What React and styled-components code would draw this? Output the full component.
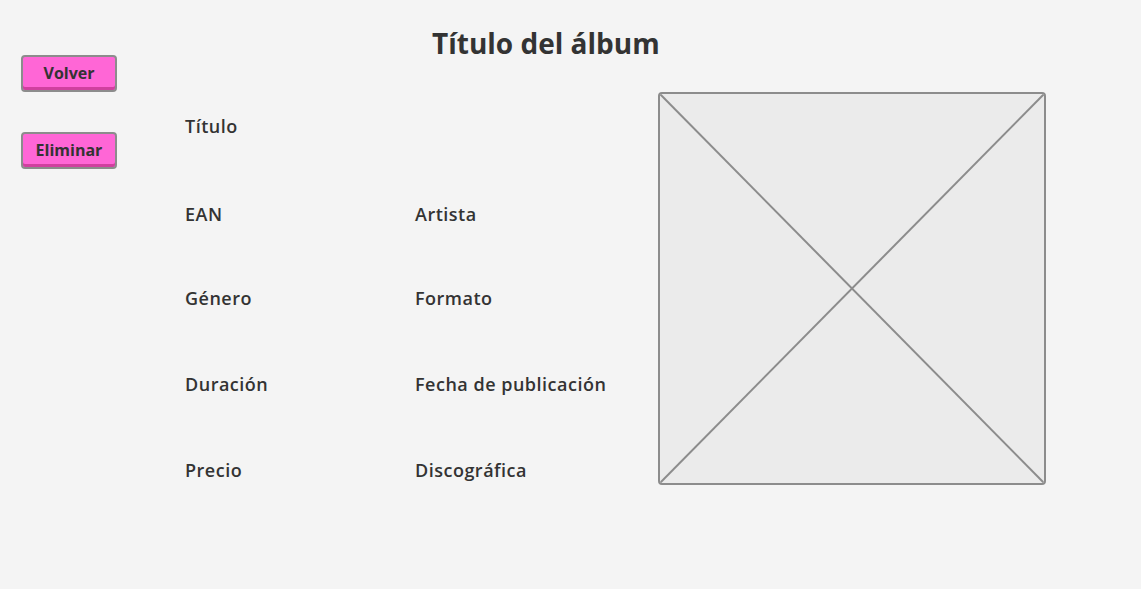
import React from "react";
import styled, { createGlobalStyle } from "styled-components";

const Global = createGlobalStyle`
  html, body { margin: 0; padding: 0; background: #f4f4f4; }
  body { font-family: "Open Sans", Lato, "Noto Sans", sans-serif; color: #333; }
`;

const Page = styled.div`
  display: flex;
  min-height: 589px;
  padding-left: 21px;
  box-sizing: border-box;
  background: #f4f4f4;
`;

const Sidebar = styled.nav`
  display: flex;
  flex-direction: column;
  gap: 40px;
  padding-top: 55px;
  width: 96px;
`;

const Button = styled.button`
  width: 96px;
  height: 37px;
  box-sizing: border-box;
  border: 2px solid #8c8c8c;
  border-radius: 4px;
  background: #ff66d6;
  box-shadow: inset 0 -3px 0 #d0409f;
  font-family: inherit;
  font-weight: 700;
  font-size: 16px;
  color: #333;
  padding: 0 0 2px;
  cursor: pointer;
`;

const Main = styled.main`
  display: flex;
  flex-direction: column;
  margin-left: 68px;
`;

const Title = styled.h1`
  margin: 26px 0 0;
  padding-left: 247px;
  font-size: 28px;
  line-height: 34px;
  font-weight: 700;
  color: #333;
`;

const Content = styled.section`
  display: flex;
  margin-top: 32px;
`;

const Fields = styled.div`
  display: grid;
  grid-template-columns: 230px 243px;
  grid-template-rows: repeat(5, 22px);
  row-gap: 64px;
  padding-top: 23px;
  align-content: start;
`;

const Label = styled.div`
  grid-column: ${(p) => p.$col || "auto"};
  margin-top: ${(p) => p.$nudge || 0}px;
  font-size: 18px;
  line-height: 22px;
  font-weight: 600;
  letter-spacing: 0.5px;
  color: #333;
  white-space: nowrap;
`;

const ImageBox = styled.div`
  width: 388px;
  height: 393px;
  box-sizing: border-box;
  border: 2px solid #8c8c8c;
  border-radius: 4px;
  background: #ebebeb;
  overflow: hidden;
  svg { display: block; width: 100%; height: 100%; }
`;

export default function App() {
  return (
    <>
      <Global />
      <Page>
        <Sidebar>
          <Button>Volver</Button>
          <Button>Eliminar</Button>
        </Sidebar>
        <Main>
          <Title>Título del álbum</Title>
          <Content>
            <Fields>
              <Label $col="1 / span 2">Título</Label>
              <Label $nudge={2}>EAN</Label>
              <Label $nudge={2}>Artista</Label>
              <Label>Género</Label>
              <Label>Formato</Label>
              <Label>Duración</Label>
              <Label>Fecha de publicación</Label>
              <Label>Precio</Label>
              <Label>Discográfica</Label>
            </Fields>
            <ImageBox>
              <svg viewBox="0 0 384 389" preserveAspectRatio="none">
                <line x1="0" y1="0" x2="384" y2="389" stroke="#8c8c8c" strokeWidth="2" />
                <line x1="384" y1="0" x2="0" y2="389" stroke="#8c8c8c" strokeWidth="2" />
              </svg>
            </ImageBox>
          </Content>
        </Main>
      </Page>
    </>
  );
}
